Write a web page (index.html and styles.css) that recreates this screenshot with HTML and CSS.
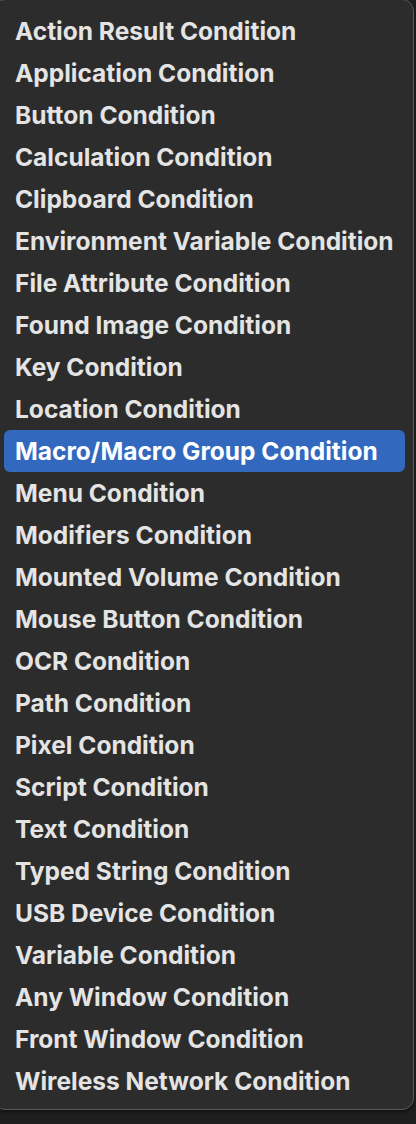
FILE: index.html
```html
<!DOCTYPE html>
<html>
<head>
<meta charset="utf-8">
<link rel="stylesheet" href="styles.css">
</head>
<body>
<div class="menu">
  <div class="item">Action Result Condition</div>
  <div class="item">Application Condition</div>
  <div class="item">Button Condition</div>
  <div class="item">Calculation Condition</div>
  <div class="item">Clipboard Condition</div>
  <div class="item">Environment Variable Condition</div>
  <div class="item">File Attribute Condition</div>
  <div class="item">Found Image Condition</div>
  <div class="item">Key Condition</div>
  <div class="item">Location Condition</div>
  <div class="item selected">Macro/Macro Group Condition</div>
  <div class="item">Menu Condition</div>
  <div class="item">Modifiers Condition</div>
  <div class="item">Mounted Volume Condition</div>
  <div class="item">Mouse Button Condition</div>
  <div class="item">OCR Condition</div>
  <div class="item">Path Condition</div>
  <div class="item">Pixel Condition</div>
  <div class="item">Script Condition</div>
  <div class="item">Text Condition</div>
  <div class="item">Typed String Condition</div>
  <div class="item">USB Device Condition</div>
  <div class="item">Variable Condition</div>
  <div class="item">Any Window Condition</div>
  <div class="item">Front Window Condition</div>
  <div class="item">Wireless Network Condition</div>
</div>
</body>
</html>
```
FILE: styles.css
```css
html, body {
  margin: 0;
  padding: 0;
  background: #1e1e1e;
  height: 100%;
  overflow: hidden;
}
.menu {
  box-sizing: border-box;
  width: 421px;
  margin: -1px 0 0 -7px;
  height: 1111px;
  padding: 10px 8px 0 10px;
  background: #2c2c2c;
  border: 1px solid #5a5a5a;
  border-radius: 12px;
  box-shadow: 0 2px 3px rgba(0,0,0,0.5);
}
.item {
  height: 42px;
  line-height: 42px;
  padding-left: 11px;
  border-radius: 6px;
  font-family: Inter, "Liberation Sans", sans-serif;
  font-weight: 700;
  font-size: 24.5px;
  color: #e4e4e4;
  white-space: nowrap;
}
.item.selected {
  background: #3269bf;
  color: #ffffff;
}
```
